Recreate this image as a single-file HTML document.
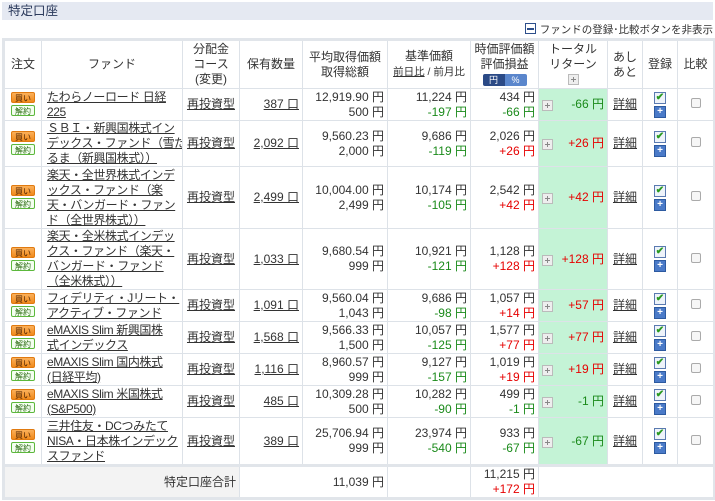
<!DOCTYPE html><html><head><meta charset="utf-8"><style>
body{margin:0;width:715px;height:501px;overflow:hidden;background:#fff;font-family:"Liberation Sans","Noto Sans CJK JP",sans-serif;font-size:12px;color:#333}
.title{position:absolute;left:2px;top:2px;width:711px;height:18px;background:#e5e9f2;color:#2b3a5c;font-size:12.5px;line-height:18px;padding-left:6px;box-sizing:border-box}
.hide{position:absolute;right:2px;top:23px;font-size:10.5px;color:#333;line-height:14px}
.hide i{display:inline-block;width:9px;height:9px;border:1px solid #2d4f8b;vertical-align:-1px;margin-right:4px;position:relative;background:#fff}
.hide i:after{content:"";position:absolute;left:1px;top:4px;width:7px;height:2px;background:#2d4f8b}
table{position:absolute;left:2px;top:38px;border-collapse:collapse;table-layout:fixed;width:711px;border:3px solid #e1e5ea}
td,th{border:1px solid #dde2e8;padding:0 3px;line-height:15px;font-weight:normal;white-space:nowrap;overflow:hidden}
th{text-align:center;color:#333}
.f{padding:0 0 0 5px;letter-spacing:-0.4px}
.r{text-align:right}.c{text-align:center}
u{text-decoration:underline;color:#333}
.g{color:#1a8a1a}.red{color:#e60000}
.tr{background:#c4f3d6}
.btn{display:block;width:24px;height:11px;font-size:8px;line-height:11px;border-radius:2px;margin:1px 0 2px 3px;text-align:center;box-sizing:border-box}
.buy{background:linear-gradient(#fbb05a,#f08a1c);color:#4a2000;border:1px solid #e07a10}
.sell{background:#f4fff0;color:#2a6a10;border:1px solid #5cb83c}
.pl{display:inline-block;width:9px;height:9px;border:1px solid #bbb;background:#eee;position:relative;vertical-align:middle}
.pl:before{content:"";position:absolute;left:2px;top:4px;width:5px;height:1px;background:#888}
.pl:after{content:"";position:absolute;left:4px;top:2px;width:1px;height:5px;background:#888}
.ck{display:block;margin:0 auto 2px;width:10px;height:10px;border:1px solid #5a7ab0;background:#eef3fa;color:#2a9a20;font-size:10px;line-height:10px;text-align:center;font-weight:bold}
.bp{display:block;margin:0 auto;width:10px;height:10px;border:1px solid #2d5aa0;background:#4a7ac8;color:#fff;font-size:10px;line-height:9px;text-align:center;font-weight:bold}
.cb{display:inline-block;width:8px;height:8px;border:1px solid #aaa;border-radius:2px;background:#f6f6f6}
.yp{display:inline-block;background:#2b4a86;color:#fff;font-size:9px;width:22px;line-height:12px;border-radius:2px 0 0 2px}
.pp{display:inline-block;background:#5a86cc;color:#fff;font-size:9px;width:22px;line-height:12px;border-radius:0 2px 2px 0}
.tot td{background:#f3f3f3}
</style></head><body>
<div class="title">特定口座</div>
<div class="hide"><i></i>ファンドの登録･比較ボタンを非表示</div>
<table>
<colgroup><col style="width:38px"><col style="width:141px"><col style="width:57px"><col style="width:63px"><col style="width:85px"><col style="width:83px"><col style="width:68px"><col style="width:69px"><col style="width:35px"><col style="width:35px"><col style="width:37px"></colgroup>
<tr style="height:49px"><th>注文</th><th>ファンド</th><th>分配金<br>コース<br>(変更)</th><th>保有数量</th><th>平均取得価額<br>取得総額</th><th>基準価額<br><span style="font-size:10.5px"><u>前日比</u> / 前月比</span></th><th>時価評価額<br>評価損益<br><span class="yp">円</span><span class="pp">%</span></th><th>トータル<br>リターン<br><span class="pl"></span></th><th>あし<br>あと</th><th>登録</th><th>比較</th></tr>
<tr style="height:32px"><td><span class="btn buy">買い</span><span class="btn sell">解約</span></td><td class="f"><u>たわらノーロード 日経<br>225</u></td><td class="c"><u>再投資型</u></td><td class="r"><u>387 口</u></td><td class="r">12,919.90 円<br>500 円</td><td class="r">11,224 円<br><span class="g">-197 円</span></td><td class="r">434 円<br><span class="g">-66 円</span></td><td class="tr r"><span class="pl" style="float:left;margin-top:3px"></span><span class="g">-66 円</span></td><td class="c"><u>詳細</u></td><td><span class="ck">✔</span><span class="bp">+</span></td><td class="c"><span class="cb"></span></td></tr>
<tr style="height:46px"><td><span class="btn buy">買い</span><span class="btn sell">解約</span></td><td class="f"><u>ＳＢＩ・新興国株式イン<br>デックス・ファンド（雪だ<br>るま（新興国株式））</u></td><td class="c"><u>再投資型</u></td><td class="r"><u>2,092 口</u></td><td class="r">9,560.23 円<br>2,000 円</td><td class="r">9,686 円<br><span class="g">-119 円</span></td><td class="r">2,026 円<br><span class="red">+26 円</span></td><td class="tr r"><span class="pl" style="float:left;margin-top:3px"></span><span class="red">+26 円</span></td><td class="c"><u>詳細</u></td><td><span class="ck">✔</span><span class="bp">+</span></td><td class="c"><span class="cb"></span></td></tr>
<tr style="height:62px"><td><span class="btn buy">買い</span><span class="btn sell">解約</span></td><td class="f"><u>楽天・全世界株式インデ<br>ックス・ファンド（楽<br>天・バンガード・ファン<br>ド（全世界株式））</u></td><td class="c"><u>再投資型</u></td><td class="r"><u>2,499 口</u></td><td class="r">10,004.00 円<br>2,499 円</td><td class="r">10,174 円<br><span class="g">-105 円</span></td><td class="r">2,542 円<br><span class="red">+42 円</span></td><td class="tr r"><span class="pl" style="float:left;margin-top:3px"></span><span class="red">+42 円</span></td><td class="c"><u>詳細</u></td><td><span class="ck">✔</span><span class="bp">+</span></td><td class="c"><span class="cb"></span></td></tr>
<tr style="height:61px"><td><span class="btn buy">買い</span><span class="btn sell">解約</span></td><td class="f"><u>楽天・全米株式インデッ<br>クス・ファンド（楽天・<br>バンガード・ファンド<br>（全米株式））</u></td><td class="c"><u>再投資型</u></td><td class="r"><u>1,033 口</u></td><td class="r">9,680.54 円<br>999 円</td><td class="r">10,921 円<br><span class="g">-121 円</span></td><td class="r">1,128 円<br><span class="red">+128 円</span></td><td class="tr r"><span class="pl" style="float:left;margin-top:3px"></span><span class="red">+128 円</span></td><td class="c"><u>詳細</u></td><td><span class="ck">✔</span><span class="bp">+</span></td><td class="c"><span class="cb"></span></td></tr>
<tr style="height:32px"><td><span class="btn buy">買い</span><span class="btn sell">解約</span></td><td class="f"><u>フィデリティ・Jリート・<br>アクティブ・ファンド</u></td><td class="c"><u>再投資型</u></td><td class="r"><u>1,091 口</u></td><td class="r">9,560.04 円<br>1,043 円</td><td class="r">9,686 円<br><span class="g">-98 円</span></td><td class="r">1,057 円<br><span class="red">+14 円</span></td><td class="tr r"><span class="pl" style="float:left;margin-top:3px"></span><span class="red">+57 円</span></td><td class="c"><u>詳細</u></td><td><span class="ck">✔</span><span class="bp">+</span></td><td class="c"><span class="cb"></span></td></tr>
<tr style="height:32px"><td><span class="btn buy">買い</span><span class="btn sell">解約</span></td><td class="f"><u>eMAXIS Slim 新興国株<br>式インデックス</u></td><td class="c"><u>再投資型</u></td><td class="r"><u>1,568 口</u></td><td class="r">9,566.33 円<br>1,500 円</td><td class="r">10,057 円<br><span class="g">-125 円</span></td><td class="r">1,577 円<br><span class="red">+77 円</span></td><td class="tr r"><span class="pl" style="float:left;margin-top:3px"></span><span class="red">+77 円</span></td><td class="c"><u>詳細</u></td><td><span class="ck">✔</span><span class="bp">+</span></td><td class="c"><span class="cb"></span></td></tr>
<tr style="height:32px"><td><span class="btn buy">買い</span><span class="btn sell">解約</span></td><td class="f"><u>eMAXIS Slim 国内株式<br>(日経平均)</u></td><td class="c"><u>再投資型</u></td><td class="r"><u>1,116 口</u></td><td class="r">8,960.57 円<br>999 円</td><td class="r">9,127 円<br><span class="g">-157 円</span></td><td class="r">1,019 円<br><span class="red">+19 円</span></td><td class="tr r"><span class="pl" style="float:left;margin-top:3px"></span><span class="red">+19 円</span></td><td class="c"><u>詳細</u></td><td><span class="ck">✔</span><span class="bp">+</span></td><td class="c"><span class="cb"></span></td></tr>
<tr style="height:32px"><td><span class="btn buy">買い</span><span class="btn sell">解約</span></td><td class="f"><u>eMAXIS Slim 米国株式<br>(S&amp;P500)</u></td><td class="c"><u>再投資型</u></td><td class="r"><u>485 口</u></td><td class="r">10,309.28 円<br>500 円</td><td class="r">10,282 円<br><span class="g">-90 円</span></td><td class="r">499 円<br><span class="g">-1 円</span></td><td class="tr r"><span class="pl" style="float:left;margin-top:3px"></span><span class="g">-1 円</span></td><td class="c"><u>詳細</u></td><td><span class="ck">✔</span><span class="bp">+</span></td><td class="c"><span class="cb"></span></td></tr>
<tr style="height:48px"><td><span class="btn buy">買い</span><span class="btn sell">解約</span></td><td class="f"><u>三井住友・DCつみたて<br>NISA・日本株インデック<br>スファンド</u></td><td class="c"><u>再投資型</u></td><td class="r"><u>389 口</u></td><td class="r">25,706.94 円<br>999 円</td><td class="r">23,974 円<br><span class="g">-540 円</span></td><td class="r">933 円<br><span class="g">-67 円</span></td><td class="tr r"><span class="pl" style="float:left;margin-top:3px"></span><span class="g">-67 円</span></td><td class="c"><u>詳細</u></td><td><span class="ck">✔</span><span class="bp">+</span></td><td class="c"><span class="cb"></span></td></tr>
<tr class="tot" style="height:32px;border-top:3px solid #e1e5ea"><td colspan="3" class="r">特定口座合計</td><td colspan="2" class="r" style="background:#fff">11,039 円</td><td style="background:#fff"></td><td class="r" style="background:#fff">11,215 円<br><span class="red">+172 円</span></td><td colspan="4" style="background:#fff;border:none"></td></tr>
</table>
</body></html>
